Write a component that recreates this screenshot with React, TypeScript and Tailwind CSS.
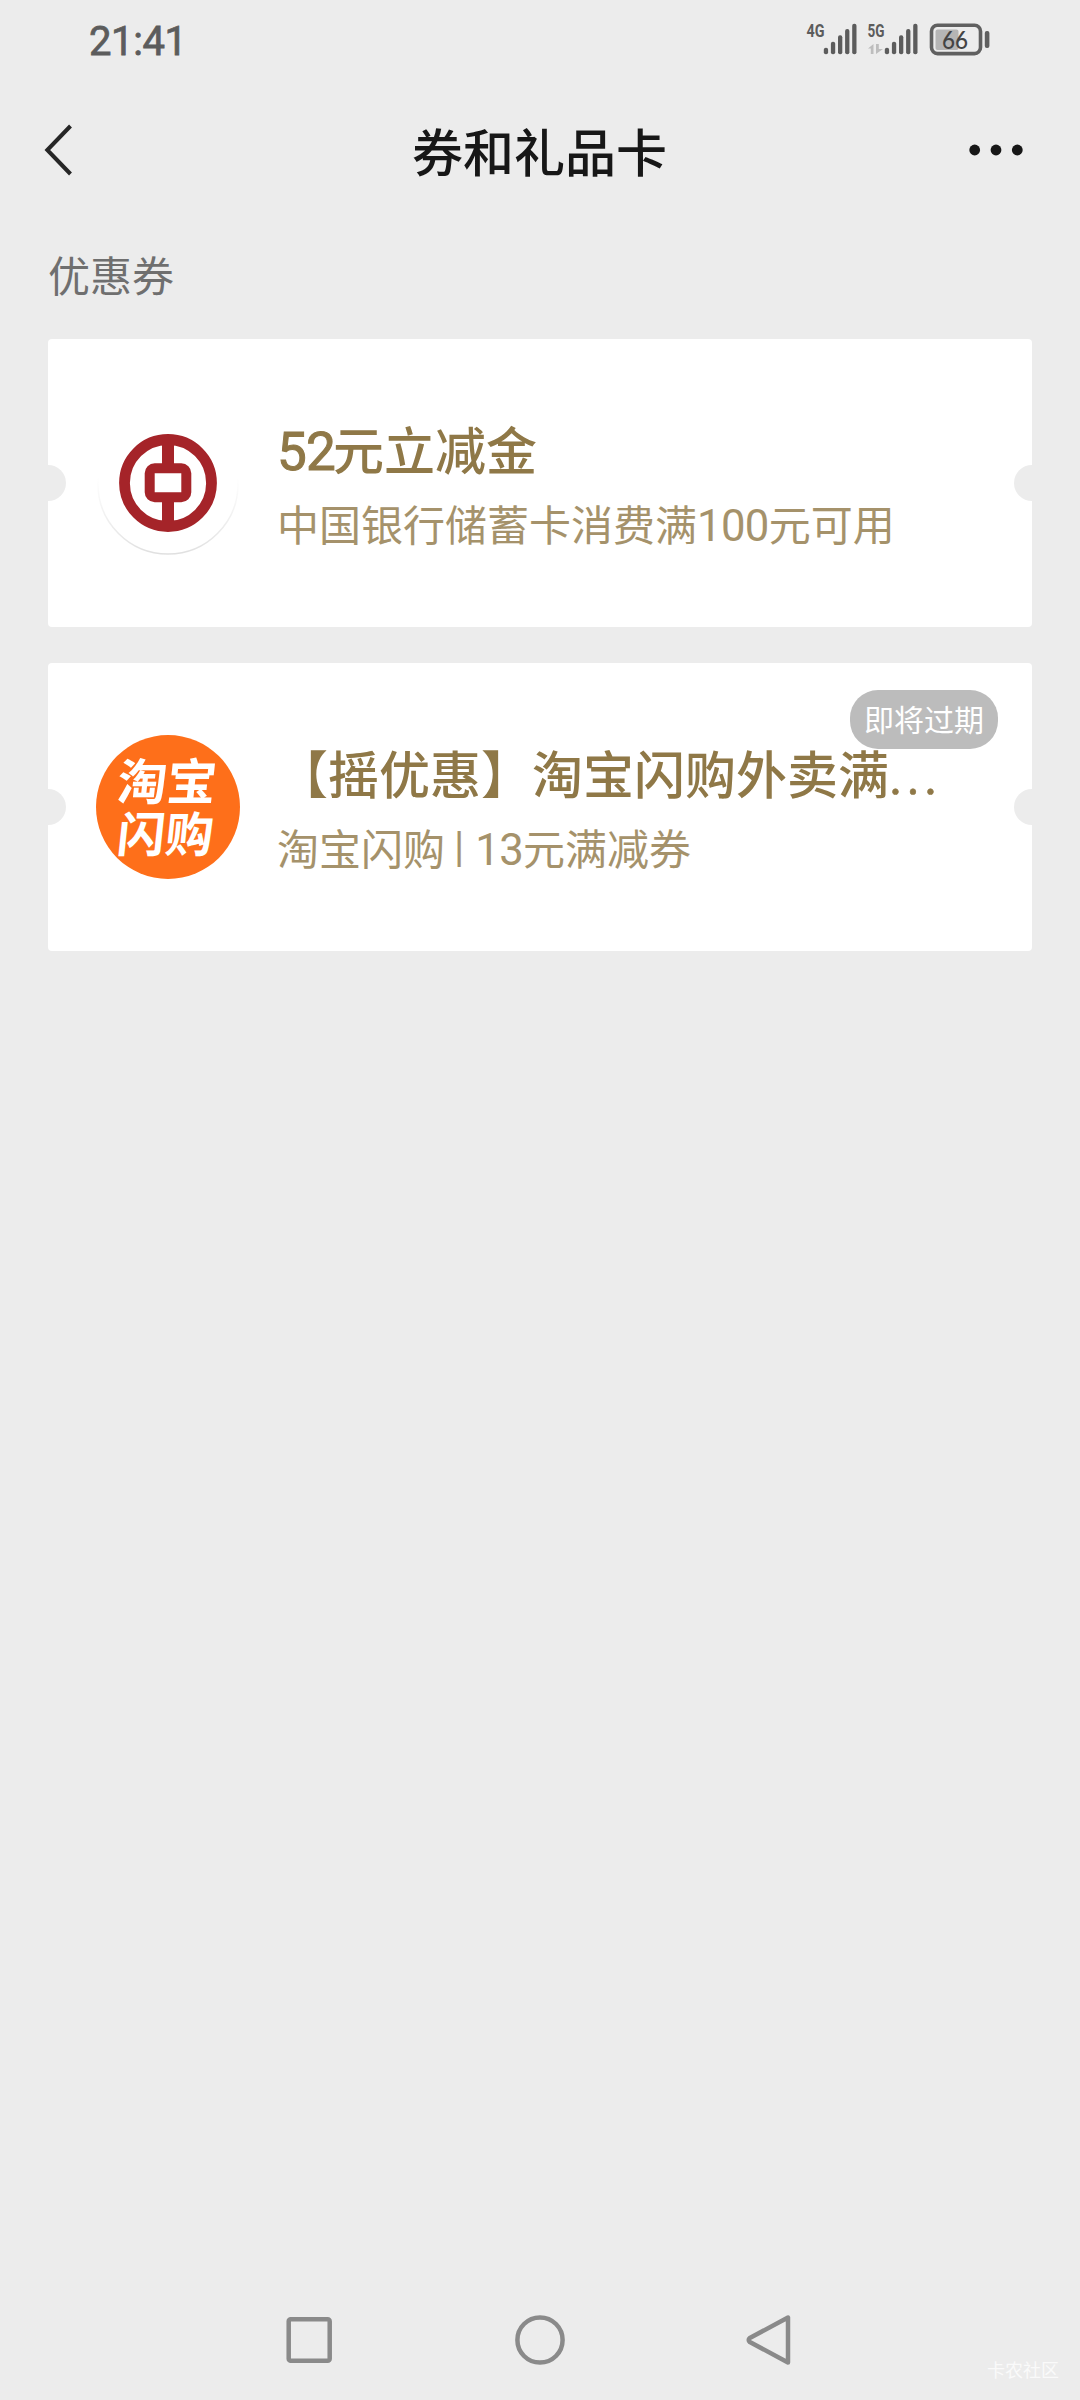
import type { ReactNode } from 'react';

function Num({ children }: { children: ReactNode }) {
  return <span className="font-['Roboto'] text-[1.04em] leading-none tracking-[-0.015em]">{children}</span>;
}

const barTops = [47.7, 41.7, 35.3, 29, 23.7];

function SignalBars({ x }: { x: number }) {
  return (
    <g fill="#5c5c5c">
      {barTops.map((top, i) => (
        <rect key={top} x={x + i * 7.1} y={top} width="4.3" height={54.3 - top} rx="2" />
      ))}
    </g>
  );
}

function StatusBar() {
  return (
    <div className="flex h-20 items-start justify-between pl-[89px] pr-[60px] text-[#5c5c5c]">
      <div className="mt-[18px] font-['Roboto'] text-[40px] leading-[48px] tracking-[-0.4px] [-webkit-text-stroke:0.8px_#5c5c5c]">21:41</div>
      <svg width="220" height="80" viewBox="800 0 220 80" fill="none">
        <text x="806.5" y="37" fill="#5c5c5c" fontFamily="Roboto" fontWeight="700" fontSize="18.5" textLength="18" lengthAdjust="spacingAndGlyphs">4G</text>
        <SignalBars x={823.8} />
        <text x="867.5" y="37" fill="#5c5c5c" fontFamily="Roboto" fontWeight="700" fontSize="18.5" textLength="17" lengthAdjust="spacingAndGlyphs">5G</text>
        <path d="M868 48.5 L873.5 44 V54 H870.8 V48.5 Z M876 44 H878.8 V49 H883 L876 54 Z" fill="#bdbdbd" />
        <SignalBars x={884.8} />
        <rect x="935.5" y="29.5" width="23" height="20.5" rx="2" fill="#b5b5b5" />
        <rect x="931.5" y="25.2" width="49" height="28.4" rx="6" stroke="#606060" strokeWidth="3.6" />
        <rect x="984.8" y="31" width="4.6" height="17" rx="2" fill="#606060" />
        <text x="942" y="48.6" fill="#444" fontFamily="Lato" fontWeight="500" fontSize="25" textLength="26" lengthAdjust="spacingAndGlyphs">66</text>
      </svg>
    </div>
  );
}

function Header() {
  return (
    <header className="grid h-[140px] grid-cols-3 items-center px-[42px]">
      <svg width="40" height="60" viewBox="42 120 40 60" fill="none">
        <path d="M70.5 126 L47.3 150 L70.5 174" stroke="#262626" strokeWidth="4" />
      </svg>
      <h1 className="-ml-px text-center text-[51px] font-medium leading-[60px] text-[#171717] whitespace-nowrap">券和礼品卡</h1>
      <svg className="justify-self-end" width="80" height="60" viewBox="958 120 80 60" fill="#171717">
        <circle cx="974.7" cy="150" r="5.4" />
        <circle cx="996" cy="150" r="5.4" />
        <circle cx="1017.3" cy="150" r="5.4" />
      </svg>
    </header>
  );
}

function BankLogo() {
  return (
    <svg className="shrink-0" width="144" height="144" viewBox="0 0 144 144" fill="none">
      <defs>
        <linearGradient id="rim" x1="0" y1="0" x2="0" y2="1">
          <stop offset="0.45" stopColor="#e6e6e6" stopOpacity="0" />
          <stop offset="1" stopColor="#e0e0e0" />
        </linearGradient>
      </defs>
      <circle cx="72" cy="73" r="70" stroke="url(#rim)" strokeWidth="1.5" />
      <g stroke="#a52429">
        <circle cx="72" cy="72" r="43.5" strokeWidth="10.8" />
        <path d="M72 30 V56 M72 88 V114" strokeWidth="12" />
        <rect x="53.7" y="57.3" width="36.6" height="29" rx="5" strokeWidth="10" />
      </g>
    </svg>
  );
}

function TaobaoLogo() {
  return (
    <div className="flex size-36 shrink-0 flex-col items-center justify-center rounded-full bg-[#fe6f1a] text-[49.5px] font-bold leading-[52px] text-white">
      <span className="-mt-1 -ml-0.5 -skew-x-6 whitespace-nowrap">淘宝</span>
      <span className="-ml-1 -skew-x-6 whitespace-nowrap text-[48px]">闪购</span>
    </div>
  );
}

function Coupon({ logo, title, detail, badge }: { logo: ReactNode; title: ReactNode; detail: ReactNode; badge?: string }) {
  return (
    <article className="relative flex h-72 items-center overflow-hidden rounded-[4px] bg-white pl-12">
      <span className="absolute -left-[18px] top-[126px] size-9 rounded-full bg-[#ececec]" />
      <span className="absolute -right-[18px] top-[126px] size-9 rounded-full bg-[#ececec]" />
      {logo}
      <div className="ml-[37px] flex flex-col whitespace-nowrap">
        <h2 className="h-[72px] text-[51px] font-medium leading-[74px] text-[#8f7847]">{title}</h2>
        <p className="mt-[7px] h-[65px] text-[42px] leading-[65px] text-[#a5926b]">{detail}</p>
      </div>
      {badge && (
        <span className="absolute right-[34px] top-[27px] flex h-[59px] w-[148px] items-center justify-center rounded-[28px] bg-[#bcbcbc] pb-0.5 text-[30px] text-white">
          {badge}
        </span>
      )}
    </article>
  );
}

function NavBar() {
  return (
    <nav className="relative mt-auto flex h-[120px] items-center justify-center">
      <svg width="520" height="60" viewBox="280 2310 520 60" fill="none" stroke="#8a8a8a" strokeWidth="4.5">
        <rect x="288.7" y="2319.3" width="41" height="41.4" rx="2" />
        <circle cx="540" cy="2340" r="22.6" />
        <path d="M788 2317.5 V2362.5 L749.8 2342 Q747.6 2340 749.8 2338 Z" strokeLinejoin="round" />
      </svg>
      <span className="absolute bottom-[19px] right-[21px] text-[18px] leading-[24px] text-[#fafafa]">卡农社区</span>
    </nav>
  );
}

export default function App() {
  return (
    <div className="flex h-[2400px] w-[1080px] flex-col bg-[#ececec] font-['Noto_Sans_CJK_SC',sans-serif]">
      <StatusBar />
      <Header />
      <main className="px-12">
        <div className="mt-[22px] h-[63px] text-[42px] leading-[63px] text-[#6f6f6f]">优惠券</div>
        <div className="mt-[34px] flex flex-col gap-9">
          <Coupon
            logo={<BankLogo />}
            title={<><span className="font-normal [-webkit-text-stroke:1px_#8f7847]"><Num>52</Num></span><span className="-ml-0.5">元立减金</span></>}
            detail={<>中国银行储蓄卡消费满<Num>100</Num>元可用</>}
          />
          <Coupon
            logo={<TaobaoLogo />}
            title={<>【摇优惠】淘宝闪购外卖满<span className="font-['Roboto'] font-normal tracking-[4px] [-webkit-text-stroke:0.6px_#8f7847]">...</span></>}
            detail={<>淘宝闪购<span className="relative -top-1 ml-[9px] mr-[11px] font-['Roboto'] leading-none">|</span><Num>13</Num>元满减券</>}
            badge="即将过期"
          />
        </div>
      </main>
      <NavBar />
    </div>
  );
}
